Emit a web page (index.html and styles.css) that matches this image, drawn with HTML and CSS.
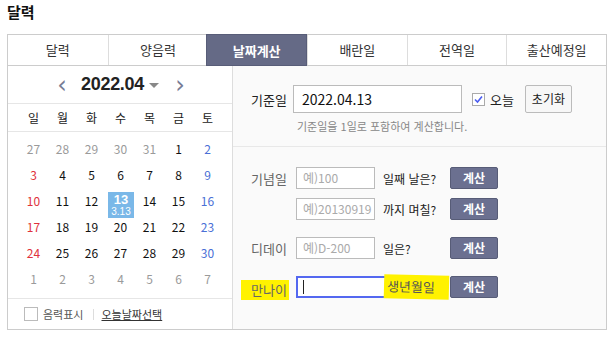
FILE: index.html
```html
<!DOCTYPE html>
<html lang="ko">
<head>
<meta charset="utf-8">
<link rel="stylesheet" href="styles.css">
</head>
<body>
<div class="page">
  <h1 class="title">달력</h1>
  <ul class="tabs">
    <li class="tab">달력</li>
    <li class="tab">양음력</li>
    <li class="tab active">날짜계산</li>
    <li class="tab">배란일</li>
    <li class="tab">전역일</li>
    <li class="tab">출산예정일</li>
  </ul>
  <div class="content">
    <div class="cal">
      <div class="cal-head">
        <span class="arrow">‹</span>
        <span class="ym">2022.04</span>
        <span class="caret"></span>
        <span class="arrow">›</span>
      </div>
      <div class="week">
        <span>일</span><span>월</span><span>화</span><span>수</span><span>목</span><span>금</span><span>토</span>
      </div>
      <div class="days">
        <span class="o">27</span><span class="o">28</span><span class="o">29</span><span class="o">30</span><span class="o">31</span><span>1</span><span class="sat">2</span>
        <span class="sun">3</span><span>4</span><span>5</span><span>6</span><span>7</span><span>8</span><span class="sat">9</span>
        <span class="sun">10</span><span>11</span><span>12</span><span class="today"><b>13</b><small>3.13</small></span><span>14</span><span>15</span><span class="sat">16</span>
        <span class="sun">17</span><span>18</span><span>19</span><span>20</span><span>21</span><span>22</span><span class="sat">23</span>
        <span class="sun">24</span><span>25</span><span>26</span><span>27</span><span>28</span><span>29</span><span class="sat">30</span>
        <span class="o">1</span><span class="o">2</span><span class="o">3</span><span class="o">4</span><span class="o">5</span><span class="o">6</span><span class="o">7</span>
      </div>
      <div class="cal-foot">
        <span class="box"></span>
        <span class="lunar">음력표시</span>
        <span class="bar"></span>
        <span class="todaysel">오늘날짜선택</span>
      </div>
    </div>
    <div class="calc">
      <div class="base">
        <span class="base-label">기준일</span>
        <span class="base-input">2022.04.13</span>
        <span class="chk"><svg width="13" height="13" viewBox="0 0 13 13"><rect x="0.5" y="0.5" width="12" height="12" fill="#fff" stroke="#aaa"/><path d="M3 6.5 L5.5 9 L10 3.5" fill="none" stroke="#4a5cf0" stroke-width="1.6"/></svg></span>
        <span class="today-lbl">오늘</span>
        <span class="reset">초기화</span>
      </div>
      <p class="hint">기준일을 1일로 포함하여 계산합니다.</p>
      <div class="rows">
        <div class="row">
          <span class="lbl">기념일</span>
          <span class="inp">예)100</span>
          <span class="suffix">일째 날은?</span>
          <span class="btn">계산</span>
        </div>
        <div class="row near">
          <span class="lbl"></span>
          <span class="inp">예)20130919</span>
          <span class="suffix">까지 며칠?</span>
          <span class="btn">계산</span>
        </div>
        <div class="row">
          <span class="lbl">디데이</span>
          <span class="inp">예)D-200</span>
          <span class="suffix">일은?</span>
          <span class="btn">계산</span>
        </div>
        <div class="row">
          <span class="lbl"><mark class="hl">만나이</mark></span>
          <span class="inp focus"><span class="cursor"></span><span class="birth">생년월일</span></span>
          <span class="btn">계산</span>
        </div>
      </div>
    </div>
  </div>
</div>
</body>
</html>
```

FILE: styles.css
```css
* { box-sizing: border-box; }
body {
  margin: 0;
  background: #fff;
  font-family: "Noto Sans CJK KR", "Noto Sans", sans-serif;
  color: #222;
}
.page { padding-left: 7px; width: 614px; }
.title {
  margin: 0;
  height: 34px;
  padding-top: 2px;
  font-size: 15px;
  font-weight: bold;
  line-height: 20px;
  color: #111;
}
.tabs {
  display: flex;
  margin: 0;
  padding: 0;
  list-style: none;
  width: 600px;
  border: 1px solid #ccc;
}
.tab {
  width: 100px;
  height: 30px;
  line-height: 29px;
  text-align: center;
  font-size: 13px;
  color: #333;
  border-left: 1px solid #ddd;
}
.tab:first-child { border-left: none; }
.tab.active {
  background: #656a86;
  color: #fff;
  font-weight: bold;
  margin: -1px 0 -1px -1px;
  width: 101px;
  height: 32px;
  line-height: 31px;
  border: 1px solid #585d78;
}
.content {
  display: flex;
  width: 600px;
  height: 264px;
  border: 1px solid #ccc;
  border-top: none;
}
.cal {
  width: 225px;
  border-right: 1px solid #ddd;
  display: flex;
  flex-direction: column;
}
.cal-head {
  height: 38px;
  display: flex;
  align-items: center;
  justify-content: center;
  border-bottom: 1px solid #e6e6e6;
  padding-left: 2px;
}
.arrow {
  font-size: 24px;
  color: #777c95;
  line-height: 20px;
  width: 18px;
  text-align: center;
  font-family: "DejaVu Sans", sans-serif;
}
.ym {
  font-size: 18px;
  font-weight: bold;
  font-family: "Liberation Sans", Arial, sans-serif;
  color: #222;
  margin: 0 5px 0 10px;
  letter-spacing: -0.3px;
}
.caret {
  width: 0; height: 0;
  border-left: 5px solid transparent;
  border-right: 5px solid transparent;
  border-top: 5px solid #888;
  margin: 2px 12px 0 0;
}
.week, .days {
  display: grid;
  grid-template-columns: repeat(7, 29px);
  padding-left: 11px;
}
.week {
  height: 28px;
  line-height: 28px;
  text-align: center;
  font-size: 12px;
  color: #222;
  border-bottom: 1px solid #e6e6e6;
}
.days {
  padding-top: 4px;
  grid-auto-rows: 26px;
  text-align: center;
  font-size: 12px;
  color: #111;
  line-height: 26px;
  height: 166px;
}
.days .o { color: #9a9a9a; }
.days .sun { color: #e0323c; }
.days .sat { color: #4a6fd6; }
.days .today {
  background: #7ab8e8;
  color: #fff;
  margin: 4px 1px 0 2px;
  height: 26px;
  display: flex;
  flex-direction: column;
  align-items: center;
  justify-content: center;
  font-family: "Liberation Sans", Arial, sans-serif;
  position: relative;
  z-index: 1;
}
.days .today b { font-size: 13px; line-height: 13px; }
.days .today small { font-size: 10px; line-height: 11px; }
.cal-foot {
  border-top: 1px solid #e6e6e6;
  flex: 1;
  display: flex;
  align-items: center;
  padding-left: 16px;
  font-size: 11px;
  color: #555;
}
.box {
  width: 14px; height: 14px;
  border: 1px solid #bbb;
  background: #fff;
  margin-right: 5px;
}
.bar {
  width: 1px; height: 11px;
  background: #ddd;
  margin: 0 7px 0 10px;
}
.todaysel { text-decoration: underline; color: #333; }
.calc {
  flex: 1;
  background: #fafafa;
  display: flex;
  flex-direction: column;
}
.base {
  display: flex;
  align-items: center;
  padding: 19px 0 0 18px;
  height: 47px;
}
.base-label { font-size: 13px; color: #222; width: 42px; }
.base-input {
  width: 169px;
  height: 28px;
  border: 1px solid #bbb;
  background: #fff;
  font-size: 14px;
  line-height: 26px;
  padding-left: 8px;
  color: #111;
}
.chk { margin-left: 10px; height: 13px; display: flex; }
.today-lbl { font-size: 13px; margin-left: 5px; color: #222; }
.reset {
  margin-left: 11px;
  width: 47px;
  height: 28px;
  border: 1px solid #bbb;
  border-radius: 2px;
  background: #f7f7f7;
  font-size: 12px;
  line-height: 26px;
  text-align: center;
  color: #222;
}
.hint {
  margin: 0;
  padding-left: 64px;
  font-size: 11px;
  color: #888;
  height: 34px;
  line-height: 27px;
  border-bottom: 1px solid #e8e8e8;
}
.rows {
  display: flex;
  flex-direction: column;
  gap: 17px;
  padding: 20px 0 0 18px;
}
.row {
  display: flex;
  align-items: center;
  height: 22px;
}
.row.near { margin-top: -8px; }
.lbl { width: 45px; font-size: 13px; color: #666; }
.hl {
  display: inline-block;
  background: #fff200;
  color: #666;
  line-height: 20px;
  height: 20px;
  padding: 0 2px 0 10px;
  margin-left: -10px;
  position: relative;
  top: 3px;
}
.inp {
  width: 79px;
  height: 22px;
  border: 1px solid #bbb;
  background: #fff;
  font-size: 12px;
  line-height: 20px;
  padding-left: 6px;
  color: #aaa;
  white-space: nowrap;
  overflow: hidden;
}
.suffix { width: 75px; padding-left: 8px; font-size: 12px; color: #222; }
.btn {
  width: 48px;
  height: 22px;
  border: 1px solid #575c77;
  border-radius: 2px;
  background: #6b7090;
  color: #fff;
  font-size: 12px;
  font-weight: bold;
  line-height: 20px;
  text-align: center;
}
.inp.focus {
  width: 145px;
  border: 2px solid #5468f0;
  margin-right: 9px;
  display: flex;
  align-items: center;
  justify-content: space-between;
  padding: 0 0 0 5px;
  overflow: visible;
}
.cursor { width: 1px; height: 14px; background: #222; }
.birth {
  font-size: 13px;
  color: #555;
  background: #fff200;
  line-height: 20px;
  padding: 2px 14px 2px 3px;
  margin-right: -10px;
  transform: rotate(1.5deg);
}
```
